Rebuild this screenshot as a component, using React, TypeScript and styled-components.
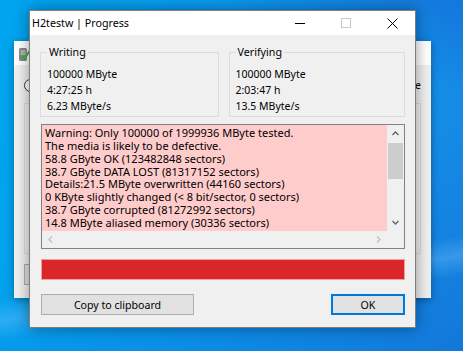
import styled, { createGlobalStyle } from "styled-components";

const GlobalStyle = createGlobalStyle`
  html, body {
    margin: 0;
    padding: 0;
  }
  body {
    font-family: "Noto Sans", "Open Sans", sans-serif;
    font-size: 10.5px;
    color: #000;
  }
`;

const FONT = `"Noto Sans", "Open Sans", sans-serif`;

const Desktop = styled.div`
  position: relative;
  width: 463px;
  height: 351px;
  overflow: hidden;
  background:
    linear-gradient(172deg, rgba(255, 255, 255, 0) 72%, rgba(120, 200, 255, 0.35) 77%, rgba(255, 255, 255, 0) 82%),
    linear-gradient(200deg, rgba(20, 100, 210, 0.55) 0%, rgba(20, 100, 210, 0) 18%),
    linear-gradient(160deg, rgba(20, 100, 210, 0) 55%, rgba(10, 90, 200, 0.35) 100%),
    linear-gradient(100deg, #00a5ef 0%, #0b9aee 45%, #1788e4 100%);
`;

const BackWindow = styled.div`
  position: absolute;
  left: 14px;
  top: 41px;
  width: 417px;
  height: 257px;
  background: #f0f0f0;
  box-shadow: 0 2px 8px rgba(0, 0, 0, 0.35);
  display: flex;
  flex-direction: column;
`;

const BackTitle = styled.div`
  height: 24px;
  background: #fff;
  display: flex;
  align-items: center;
  padding-left: 4px;
`;

const BackBody = styled.div`
  flex: 1;
  padding: 12px 10px 13px 10px;
  display: flex;
  flex-direction: column;
  gap: 10px;
  font-family: ${FONT};
  font-size: 10.5px;
`;

const BackRow = styled.div`
  display: flex;
  align-items: center;
  justify-content: space-between;
  height: 16px;
`;

const Radio = styled.span`
  width: 11px;
  height: 11px;
  border: 1px solid #333;
  border-radius: 50%;
  background: #fff;
`;

const BackFrame = styled.div`
  flex: 1;
  border: 1px solid #dcdcdc;
`;

const BackButton = styled.div`
  height: 19px;
  width: 80px;
  border: 1px solid #adadad;
  background: #e1e1e1;
`;

const Dialog = styled.div`
  position: absolute;
  left: 29px;
  top: 10px;
  width: 385px;
  height: 316px;
  border: 1px solid #7d7d7d;
  background: #f0f0f0;
  box-shadow: 0 0 14px rgba(0, 0, 0, 0.4);
  display: flex;
  flex-direction: column;
  font-family: ${FONT};
`;

const TitleBar = styled.div`
  height: 24px;
  background: #fff;
  display: flex;
  align-items: center;
`;

const Caption = styled.span`
  flex: 1;
  padding-left: 2px;
  font-size: 10.7px;
  color: #000;
`;

const CaptionButton = styled.div`
  width: 46px;
  height: 24px;
  display: flex;
  align-items: center;
  justify-content: center;
`;

const Body = styled.div`
  flex: 1;
  display: flex;
  flex-direction: column;
  padding: 9px 10px 13px 11px;
`;

const Groups = styled.div`
  display: flex;
  gap: 10px;
  margin-left: -1px;
  height: 73px;
`;

const GroupBox = styled.fieldset<{ $w: number }>`
  width: ${(p) => p.$w}px;
  box-sizing: border-box;
  margin: 0;
  padding: 6px 6px 0 6px;
  border: 1px solid #dcdcdc;
  display: flex;
  flex-direction: column;
`;

const Legend = styled.legend`
  padding: 0 2px;
  margin-left: 0;
  font-size: 10.7px;
  line-height: 16px;
`;

const Value = styled.div`
  font-size: 10.5px;
  line-height: 16px;
  white-space: nowrap;
`;

const LogBox = styled.div`
  margin-top: 7px;
  height: 125px;
  box-sizing: border-box;
  border: 1px solid #828282;
  display: grid;
  grid-template-columns: 1fr 17px;
  grid-template-rows: 1fr 17px;
  background: #f0f0f0;
`;

const LogText = styled.div`
  background: #ffcccc;
  padding: 2px 3px 0 3px;
  overflow: hidden;
  font-size: 11px;
  line-height: 12.86px;
  white-space: nowrap;
`;

const VScroll = styled.div`
  display: flex;
  flex-direction: column;
  align-items: center;
  background: #f0f0f0;
`;

const ArrowBox = styled.div`
  width: 17px;
  height: 17px;
  display: flex;
  align-items: center;
  justify-content: center;
`;

const Thumb = styled.div`
  width: 15px;
  height: 36px;
  margin-top: 1px;
  background: #cdcdcd;
`;

const Spacer = styled.div`
  flex: 1;
`;

const HScroll = styled.div`
  display: flex;
  justify-content: space-between;
  background: #f0f0f0;
`;

const Corner = styled.div`
  background: #f0f0f0;
`;

const Progress = styled.div`
  margin-top: 10px;
  height: 21px;
  box-sizing: border-box;
  border: 1px solid #e7a3a3;
  background: #da2626;
`;

const Buttons = styled.div`
  margin-top: 14px;
  display: flex;
  justify-content: space-between;
`;

const Button = styled.button<{ $w: number; $default?: boolean }>`
  width: ${(p) => p.$w}px;
  height: 21px;
  box-sizing: border-box;
  padding: 0;
  margin: 0;
  font-family: ${FONT};
  font-size: 10.6px;
  color: #000;
  background: #e1e1e1;
  border: ${(p) => (p.$default ? "2px solid #0078d7" : "1px solid #adadad")};
  display: flex;
  align-items: center;
  justify-content: center;
`;

const Chevron = ({ dir, color }: { dir: "up" | "down" | "left" | "right"; color: string }) => {
  const d = {
    up: "M1.5 6 L4.5 3 L7.5 6",
    down: "M1.5 3 L4.5 6 L7.5 3",
    left: "M6 1.5 L3 4.5 L6 7.5",
    right: "M3 1.5 L6 4.5 L3 7.5",
  }[dir];
  return (
    <svg width="9" height="9" viewBox="0 0 9 9">
      <path d={d} fill="none" stroke={color} strokeWidth="1.3" />
    </svg>
  );
};

const logLines = [
  "Warning: Only 100000 of 1999936 MByte tested.",
  "The media is likely to be defective.",
  "58.8 GByte OK (123482848 sectors)",
  "38.7 GByte DATA LOST (81317152 sectors)",
  "Details:21.5 MByte overwritten (44160 sectors)",
  "0 KByte slightly changed (< 8 bit/sector, 0 sectors)",
  "38.7 GByte corrupted (81272992 sectors)",
  "14.8 MByte aliased memory (30336 sectors)",
];

function App() {
  return (
    <Desktop>
      <GlobalStyle />
      <BackWindow>
        <BackTitle>
          <svg width="12" height="17" viewBox="0 0 12 17">
            <rect x="1" y="3" width="8" height="13" rx="1.5" fill="#8a8a8a" />
            <rect x="2.5" y="5" width="5" height="5" fill="#b0b0b0" />
            <path d="M4 11 L6.5 14 L11.5 6" fill="none" stroke="#3cb043" strokeWidth="2" />
          </svg>
        </BackTitle>
        <BackBody>
          <BackRow>
            <Radio />
            <span>Size</span>
          </BackRow>
          <BackFrame />
          <BackButton />
        </BackBody>
      </BackWindow>

      <Dialog>
        <TitleBar>
          <Caption>H2testw | Progress</Caption>
          <CaptionButton>
            <svg width="10" height="10" viewBox="0 0 10 10">
              <path d="M0 5.5 H10" stroke="#000" strokeWidth="1" />
            </svg>
          </CaptionButton>
          <CaptionButton>
            <svg width="10" height="10" viewBox="0 0 10 10">
              <rect x="0.5" y="0.5" width="9" height="9" fill="none" stroke="#c8c8c8" strokeWidth="1" />
            </svg>
          </CaptionButton>
          <CaptionButton>
            <svg width="11" height="11" viewBox="0 0 11 11">
              <path d="M0.5 0.5 L10.5 10.5 M10.5 0.5 L0.5 10.5" stroke="#000" strokeWidth="1" />
            </svg>
          </CaptionButton>
        </TitleBar>

        <Body>
          <Groups>
            <GroupBox $w={179}>
              <Legend>Writing</Legend>
              <Value>100000 MByte</Value>
              <Value>4:27:25 h</Value>
              <Value>6.23 MByte/s</Value>
            </GroupBox>
            <GroupBox $w={177}>
              <Legend>Verifying</Legend>
              <Value>100000 MByte</Value>
              <Value>2:03:47 h</Value>
              <Value>13.5 MByte/s</Value>
            </GroupBox>
          </Groups>

          <LogBox>
            <LogText>
              {logLines.map((l) => (
                <div key={l}>{l}</div>
              ))}
            </LogText>
            <VScroll>
              <ArrowBox>
                <Chevron dir="up" color="#606060" />
              </ArrowBox>
              <Thumb />
              <Spacer />
              <ArrowBox>
                <Chevron dir="down" color="#606060" />
              </ArrowBox>
            </VScroll>
            <HScroll>
              <ArrowBox>
                <Chevron dir="left" color="#c0c0c0" />
              </ArrowBox>
              <ArrowBox>
                <Chevron dir="right" color="#c0c0c0" />
              </ArrowBox>
            </HScroll>
            <Corner />
          </LogBox>

          <Progress />

          <Buttons>
            <Button $w={153}>Copy to clipboard</Button>
            <Button $w={74} $default>
              OK
            </Button>
          </Buttons>
        </Body>
      </Dialog>
    </Desktop>
  );
}

export default App;
